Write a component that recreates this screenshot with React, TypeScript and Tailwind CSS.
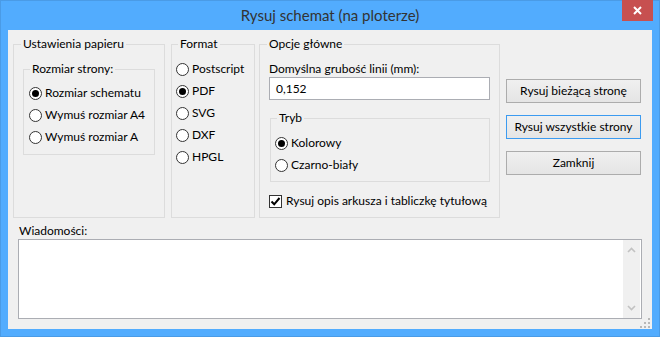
import React from 'react';

const Radio = ({ label, checked }: { label: string; checked?: boolean }) => (
  <div className="flex items-center h-[22px] gap-[3px]">
    <span className="w-[13px] h-[13px] rounded-full border border-[#333] bg-white flex items-center justify-center shrink-0">
      {checked && <span className="w-[7px] h-[7px] rounded-full bg-black" />}
    </span>
    <span className="whitespace-nowrap">{label}</span>
  </div>
);

const Checkbox = ({ label }: { label: string }) => (
  <div className="flex items-center h-[22px] gap-[4px]">
    <span className="w-[13px] h-[13px] border border-[#333] bg-white flex items-center justify-center shrink-0">
      <svg width="11" height="11" viewBox="0 0 11 11">
        <path d="M1.5 5.5 L4.2 8.3 L9.5 2" fill="none" stroke="#000" strokeWidth="2" />
      </svg>
    </span>
    <span className="whitespace-nowrap">{label}</span>
  </div>
);

const Btn = ({ children, focused }: { children: React.ReactNode; focused?: boolean }) => (
  <div
    className={`h-[24px] flex items-center justify-center border bg-linear-to-b from-[#f0f0f0] to-[#e5e5e5] ${
      focused ? 'border-[#3c9bf0]' : 'border-[#acacac]'
    }`}
  >
    {children}
  </div>
);

export default function App() {
  return (
    <div className="w-[660px] h-[337px] bg-[#52acfe] shadow-[inset_0_0_0_1px_#4a9be6] flex flex-col text-[12px] leading-[16px] text-black font-['Lato','Noto_Sans',sans-serif]">
      {/* Title bar */}
      <div className="h-[30px] relative flex items-center justify-center text-[15px] text-[#333]">
        Rysuj schemat (na ploterze)
        <div className="absolute top-0 right-[7px] w-[31px] h-[21px] bg-[#c75050] flex items-center justify-center">
          <svg width="9" height="9" viewBox="0 0 9 9">
            <path d="M1 1 L8 8 M8 1 L1 8" stroke="#fff" strokeWidth="2" />
          </svg>
        </div>
      </div>

      {/* Client area */}
      <div className="mx-[8px] h-[299px] bg-[#f0f0f0] relative flex flex-col">
        <div className="flex pt-[6px] pl-[5px]">
          {/* Paper settings */}
          <fieldset className="w-[152px] h-[182px] border border-[#dcdcdc] p-0">
            <legend className="ml-[7px] px-[2px]">Ustawienia papieru</legend>
            <fieldset className="ml-[9px] mt-[9px] w-[132px] border border-[#dcdcdc] pl-[5px] pt-[5px] pb-[6px]">
              <legend className="ml-[1px] px-[2px]">Rozmiar strony:</legend>
              <Radio label="Rozmiar schematu" checked />
              <Radio label="Wymuś rozmiar A4" />
              <Radio label="Wymuś rozmiar A" />
            </fieldset>
          </fieldset>

          {/* Format */}
          <fieldset className="ml-[6px] w-[84px] h-[182px] border border-[#dcdcdc] p-0">
            <legend className="ml-[6px] px-[2px]">Format</legend>
            <div className="pl-[4px] pt-[6px]">
              <Radio label="Postscript" />
              <Radio label="PDF" checked />
              <Radio label="SVG" />
              <Radio label="DXF" />
              <Radio label="HPGL" />
            </div>
          </fieldset>

          {/* Main options */}
          <fieldset className="ml-[4px] w-[241px] h-[182px] border border-[#dcdcdc] p-0">
            <legend className="ml-[7px] px-[2px]">Opcje główne</legend>
            <div className="pl-[9px] pt-[9px] flex flex-col">
              <div>Domyślna grubość linii (mm):</div>
              <div className="w-[221px] h-[23px] border border-[#abadb3] bg-white flex items-center pl-[6px]">0,152</div>
              <fieldset className="ml-[1px] mt-[10px] w-[220px] border border-[#dcdcdc] pl-[4px] pt-[6px] pb-[5px]">
                <legend className="ml-[2px] px-[2px]">Tryb</legend>
                <Radio label="Kolorowy" checked />
                <Radio label="Czarno-biały" />
              </fieldset>
              <div className="mt-[8px]">
                <Checkbox label="Rysuj opis arkusza i tabliczkę tytułową" />
              </div>
            </div>
          </fieldset>

          {/* Buttons */}
          <div className="ml-[6px] w-[135px] pt-[43px] flex flex-col gap-[12px]">
            <Btn>Rysuj bieżącą stronę</Btn>
            <Btn focused>Rysuj wszystkie strony</Btn>
            <Btn>Zamknij</Btn>
          </div>
        </div>

        {/* Messages */}
        <div className="mt-[5px] ml-[11px]">Wiadomości:</div>
        <div className="ml-[10px] w-[624px] h-[80px] border border-[#abadb3] bg-white flex">
          <div className="flex-1" />
          <div className="w-[17px] mr-px bg-[#f0f0f0] flex flex-col justify-between items-center py-[7px]">
            <svg width="9" height="6" viewBox="0 0 9 6">
              <path d="M1 5 L4.5 1.5 L8 5" fill="none" stroke="#c2c2c2" strokeWidth="1.6" />
            </svg>
            <svg width="9" height="6" viewBox="0 0 9 6">
              <path d="M1 1 L4.5 4.5 L8 1" fill="none" stroke="#c2c2c2" strokeWidth="1.6" />
            </svg>
          </div>
        </div>

        {/* Size grip */}
        <svg className="absolute right-[2px] bottom-[1px]" width="10" height="10" viewBox="0 0 10 10">
          <rect x="8" y="0" width="2" height="2" fill="#b8b8b8" />
          <rect x="4" y="4" width="2" height="2" fill="#b8b8b8" />
          <rect x="8" y="4" width="2" height="2" fill="#b8b8b8" />
          <rect x="0" y="8" width="2" height="2" fill="#b8b8b8" />
          <rect x="4" y="8" width="2" height="2" fill="#b8b8b8" />
          <rect x="8" y="8" width="2" height="2" fill="#b8b8b8" />
        </svg>
      </div>
    </div>
  );
}
